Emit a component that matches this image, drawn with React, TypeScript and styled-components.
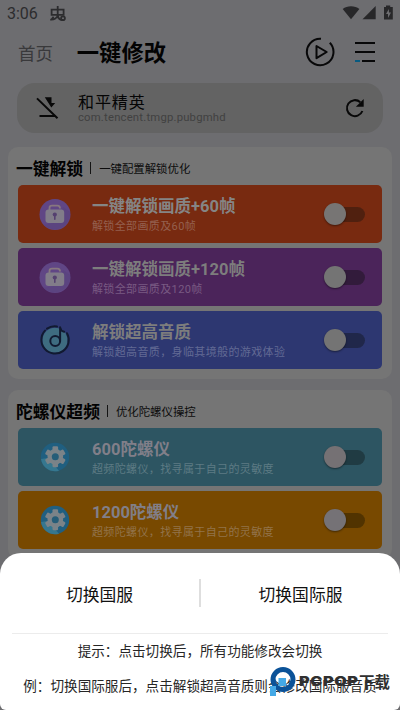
import React from "react";
import styled, { createGlobalStyle } from "styled-components";

const GlobalStyle = createGlobalStyle`
  * { box-sizing: border-box; }
  body {
    margin: 0;
    background: #6d6d70;
    font-family: Roboto, "Noto Sans CJK SC", sans-serif;
    color: #050505;
  }
`;

const Screen = styled.div`
  position: relative;
  width: 400px;
  height: 710px;
  overflow: hidden;
  background: #6d6d70;
  white-space: nowrap;
`;

const StatusBar = styled.div`
  height: 28px;
  display: flex;
  align-items: center;
  justify-content: space-between;
  padding: 0 7px;
`;

const StatusGroup = styled.div`
  display: flex;
  align-items: center;
  gap: 11px;
`;

const StatusIcons = styled.div`
  display: flex;
  align-items: center;
  height: 16px;
  margin-top: -2px;
`;

const Clock = styled.span`
  font-size: 16px;
  line-height: 20px;
  color: #2c2c2e;
  width: 31px;
`;

const Header = styled.header`
  height: 55px;
  display: flex;
  align-items: center;
  padding: 0 25px 7px 18px;
`;

const Tab = styled.span<{ $active?: boolean }>`
  font-size: ${(p) => (p.$active ? 22.3 : 17.5)}px;
  font-weight: ${(p) => (p.$active ? 700 : 400)};
  line-height: 28px;
  color: ${(p) => (p.$active ? "#030303" : "#39393b")};
  width: ${(p) => (p.$active ? 229 : 59)}px;
  padding-top: ${(p) => (p.$active ? 2 : 4)}px;
`;

const HeaderActions = styled.div`
  display: flex;
  align-items: center;
  gap: 20px;
`;

const SearchBar = styled.section`
  height: 50px;
  margin: 0 17px 14px;
  border-radius: 18px;
  background: #636363;
  display: flex;
  align-items: center;
  padding: 0 18px;
`;

const AppInfo = styled.div`
  flex: 1;
  margin-left: 18px;
  padding-top: 1px;
`;

const AppName = styled.div`
  font-size: 16px;
  letter-spacing: 0.9px;
  line-height: 18px;
`;

const PackageName = styled.div`
  font-size: 11.3px;
  letter-spacing: 0.2px;
  line-height: 12px;
  color: #414141;
`;

const Panel = styled.section`
  margin: 0 8px 11px;
  padding: 0 10px 10px;
  border-radius: 10px;
  background: #757575;
`;

const PanelHeader = styled.div`
  height: 38px;
  display: flex;
  align-items: center;
  margin-left: -2px;
  padding-top: 6px;
`;

const PanelTitle = styled.span`
  font-size: 16.8px;
  font-weight: 700;
  line-height: 20px;
  color: #020202;
`;

const Divider = styled.span`
  width: 1px;
  height: 12px;
  margin: 0 8px 2px 7px;
  background: #141414;
`;

const PanelNote = styled.span`
  font-size: 11.4px;
  line-height: 16px;
  color: #0c0c0c;
`;

const Cards = styled.div`
  display: grid;
  gap: 5px;
`;

const Card = styled.div<{ $color: string }>`
  height: 58px;
  border-radius: 5px;
  background: ${(p) => p.$color};
  display: flex;
  align-items: center;
  padding: 0 17px 0 20px;
`;

const CardText = styled.div`
  flex: 1;
  margin-left: 20px;
  padding-top: 4px;
`;

const CardTitle = styled.div<{ $color: string }>`
  font-size: 16.5px;
  font-weight: 700;
  line-height: 21px;
  color: ${(p) => p.$color};
`;

const CardNote = styled.div<{ $color: string }>`
  font-size: 11px;
  letter-spacing: 0.37px;
  line-height: 20px;
  color: ${(p) => p.$color};
`;

const Track = styled.div<{ $color: string }>`
  width: 42px;
  height: 15px;
  display: flex;
  align-items: center;
  border-radius: 8px;
  background: linear-gradient(90deg, transparent 10px, ${(p) => p.$color} 10px);
`;

const Knob = styled.div<{ $color: string }>`
  width: 22px;
  height: 22px;
  margin-left: 1px;
  border-radius: 50%;
  background: ${(p) => p.$color};
  box-shadow: 0 1px 2px rgba(0, 0, 0, 0.45);
`;

const Sheet = styled.section`
  position: absolute;
  left: 0;
  right: 0;
  bottom: 0;
  height: 157px;
  background: #fff;
  border-radius: 21px 21px 6px 6px;
`;

const Choices = styled.div`
  height: 80px;
  display: grid;
  grid-template-columns: 1fr 2px 1fr;
  align-items: center;
`;

const Rule = styled.div`
  height: 1px;
  margin: 0 12px;
  background: #ececec;
`;

const Choice = styled.div`
  padding-top: 3px;
  text-align: center;
  font-size: 16.8px;
  line-height: 24px;
  color: #111;
`;

const ChoiceDivider = styled.div`
  height: 28px;
  background: #dedede;
`;

const Hint = styled.p`
  margin: 0;
  height: 35px;
  line-height: 35px;
  font-size: 13.6px;
  text-align: center;
  color: #262626;
`;

const Watermark = styled.div`
  position: absolute;
  left: 270px;
  top: 666px;
  width: 125px;
  height: 32px;
  display: flex;
  align-items: flex-start;
`;

const WatermarkLatin = styled.span`
  font-family: Inter, Roboto, sans-serif;
  font-weight: 900;
  font-size: 13.5px;
  line-height: 16px;
  letter-spacing: 0.5px;
  color: #303030;
  width: 60px;
  margin: 7px 0 0 3px;
  transform: scaleX(1.2);
  transform-origin: left;
`;

const WatermarkHan = styled.span`
  font-family: "Noto Sans CJK SC", sans-serif;
  font-weight: 700;
  font-size: 15.4px;
  line-height: 18px;
  color: #303030;
  margin-top: 6px;
`;

const BugIcon = () => (
  <svg width="18" height="18" viewBox="0 0 18 18" fill="none" stroke="#2c2c2e" strokeWidth="1.8">
    <path d="M2.6 4.6H14.6V9.8H2.6Z" />
    <path d="M8.7 1V13.2M8.7 9.8C8.7 13 5 15 1.2 14.6M4.6 11.8L2.4 14.6M8.7 9.8Q9.5 15.2 14 15.2" />
    <circle cx="14" cy="13.3" r="1.9" />
  </svg>
);

const SignalIcons = () => (
  <svg width="51" height="16" viewBox="0 0 51 16" fill="#272729">
    <path d="M0.7 4C5 .3 13 .3 17.4 4L9 14.2Z" />
    <path d="M33.7 1V14.3H20.5Z" />
    <path fillRule="evenodd" d="M42 2H44V.4H48.2V2H50.8V14.5H42ZM46.8 4L44 9H46V13L49 7.5H47Z" />
  </svg>
);

const PlayIcon = () => (
  <svg width="30" height="30" viewBox="0 0 30 30" fill="none" stroke="#080809" strokeWidth="2">
    <path d="M16 1.7A13.3 13.3 0 1 0 24.8 5.8" />
    <path d="M11.5 9V21.2L21.7 15Z" strokeLinejoin="round" />
  </svg>
);

const MenuIcon = () => (
  <svg width="20" height="22" viewBox="0 0 20 22" strokeWidth="2" stroke="#080809">
    <path d="M0 2H20M0 11H20M7 20H20" />
    <path d="M0 20H5" stroke="#075a80" />
  </svg>
);

const UnpinIcon = () => (
  <svg width="25" height="24" viewBox="0 0 25 24">
    <path d="M9.8 1.2H16.5V7H20.2L16.3 11.5Z" fill="#080808" />
    <path d="M4.5 20H20.8M2 2.4L22.5 22.2" stroke="#080808" strokeWidth="2" />
  </svg>
);

const RefreshIcon = () => (
  <svg width="20" height="20" viewBox="0 0 20 20">
    <path d="M15.3 4.2A8 8 0 1 0 17.4 13" fill="none" stroke="#080808" strokeWidth="2" />
    <path d="M18.7 1V8.8H10.9Z" fill="#080808" />
  </svg>
);

const LockIcon = () => (
  <svg width="34" height="34" viewBox="0 0 34 34">
    <circle cx="17" cy="17.5" r="15.5" fill="#604685" />
    <path d="M6 28A15.5 15.5 0 0 0 32 15L25 10L20 25Z" fill="#55417c" opacity=".5" />
    <path d="M11.5 13V11Q11.5 8.7 14 8.7H19.5Q22 8.7 22 11.5" fill="none" stroke="#87777f" strokeWidth="1.8" />
    <rect x="7.5" y="12.5" width="18.7" height="13.6" rx="3" fill="#817c89" />
    <circle cx="16.8" cy="17.5" r="2.1" fill="#554070" />
    <path d="M16.8 18V22.2" stroke="#554070" strokeWidth="1.6" strokeLinecap="round" />
  </svg>
);

const MusicIcon = () => (
  <svg width="34" height="34" viewBox="0 0 34 34" fill="none" stroke="#111a30" strokeWidth="2">
    <circle cx="17" cy="17.2" r="12.5" fill="#3e6c80" stroke="none" />
    <path d="M19 3.6A13.7 13.7 0 0 0 9 5.7M7 7.6A13.7 13.7 0 1 0 29 10.2" strokeLinecap="round" />
    <circle cx="17.2" cy="18" r="4.9" />
    <path d="M22.1 18V4.3Q22.5 7.8 26.2 8.7" strokeLinecap="round" strokeLinejoin="round" />
  </svg>
);

const GearIcon = () => (
  <svg width="34" height="34" viewBox="0 0 34 34">
    <circle cx="17" cy="17" r="14.2" fill="#205f80" />
    <path d="M3 19A14.2 14.2 0 0 0 21 30.7L10 18Z" fill="#36778f" />
    <g fill="#7b8388">
      <circle cx="17.3" cy="16.8" r="7.8" />
      {[0, 60, 120, 180, 240, 300].map((a) => (
        <rect key={a} x="14.5" y="6.3" width="5.6" height="5" rx="1.2" transform={`rotate(${a} 17.3 16.8)`} />
      ))}
    </g>
    <circle cx="17.3" cy="16.8" r="3.5" fill="#265d78" />
  </svg>
);

interface Feature {
  title: string;
  note: string;
  icon: React.ReactNode;
  color: string;
  titleColor: string;
  noteColor: string;
  track: string;
  knob: string;
}

const unlocks: Feature[] = [
  { title: "一键解锁画质+60帧", note: "解锁全部画质及60帧", icon: <LockIcon />, color: "#782a10", titleColor: "#858585", noteColor: "#94604f", track: "#50200f", knob: "#777574" },
  { title: "一键解锁画质+120帧", note: "解锁全部画质及120帧", icon: <LockIcon />, color: "#4b245a", titleColor: "#7d7d7d", noteColor: "#795a83", track: "#321b3b", knob: "#747474" },
  { title: "解锁超高音质", note: "解锁超高音质，身临其境般的游戏体验", icon: <MusicIcon />, color: "#2d3771", titleColor: "#7d7d7d", noteColor: "#626a94", track: "#20274a", knob: "#747474" },
];

const gyros: Feature[] = [
  { title: "600陀螺仪", note: "超频陀螺仪，找寻属于自己的灵敏度", icon: <GearIcon />, color: "#2d5562", titleColor: "#817f89", noteColor: "#5d7b84", track: "#203b43", knob: "#757174" },
  { title: "1200陀螺仪", note: "超频陀螺仪，找寻属于自己的灵敏度", icon: <GearIcon />, color: "#784900", titleColor: "#817f89", noteColor: "#92734b", track: "#513300", knob: "#757276" },
];

const FeatureCard = ({ f }: { f: Feature }) => (
  <Card $color={f.color}>
    {f.icon}
    <CardText>
      <CardTitle $color={f.titleColor}>{f.title}</CardTitle>
      <CardNote $color={f.noteColor}>{f.note}</CardNote>
    </CardText>
    <Track $color={f.track}>
      <Knob $color={f.knob} />
    </Track>
  </Card>
);

const FeaturePanel = ({ title, note, items }: { title: string; note: string; items: Feature[] }) => (
  <Panel>
    <PanelHeader>
      <PanelTitle>{title}</PanelTitle>
      <Divider />
      <PanelNote>{note}</PanelNote>
    </PanelHeader>
    <Cards>
      {items.map((f) => (
        <FeatureCard key={f.title} f={f} />
      ))}
    </Cards>
  </Panel>
);

export default function App() {
  return (
    <Screen>
      <GlobalStyle />
      <StatusBar>
        <StatusGroup>
          <Clock>3:06</Clock>
          <BugIcon />
        </StatusGroup>
        <StatusIcons>
          <SignalIcons />
        </StatusIcons>
      </StatusBar>
      <Header>
        <Tab>首页</Tab>
        <Tab $active>一键修改</Tab>
        <HeaderActions>
          <PlayIcon />
          <MenuIcon />
        </HeaderActions>
      </Header>
      <SearchBar>
        <UnpinIcon />
        <AppInfo>
          <AppName>和平精英</AppName>
          <PackageName>com.tencent.tmgp.pubgmhd</PackageName>
        </AppInfo>
        <RefreshIcon />
      </SearchBar>
      <FeaturePanel title="一键解锁" note="一键配置解锁优化" items={unlocks} />
      <FeaturePanel title="陀螺仪超频" note="优化陀螺仪操控" items={gyros} />
      <Sheet>
        <Choices>
          <Choice>切换国服</Choice>
          <ChoiceDivider />
          <Choice>切换国际服</Choice>
        </Choices>
        <Rule />
        <Hint>提示：点击切换后，所有功能修改会切换</Hint>
        <Hint>例：切换国际服后，点击解锁超高音质则会修改国际服音质</Hint>
      </Sheet>
      <Watermark>
        <svg width="26" height="31" viewBox="0 0 26 31">
          <circle cx="13" cy="13.5" r="10" fill="none" stroke="#0b5298" strokeWidth="5" />
          <path d="M8.5 12H16V20H6V30H0V20H8.5Z" fill="#45a9e6" />
        </svg>
        <WatermarkLatin>PCPOP</WatermarkLatin>
        <WatermarkHan>下载</WatermarkHan>
      </Watermark>
    </Screen>
  );
}
